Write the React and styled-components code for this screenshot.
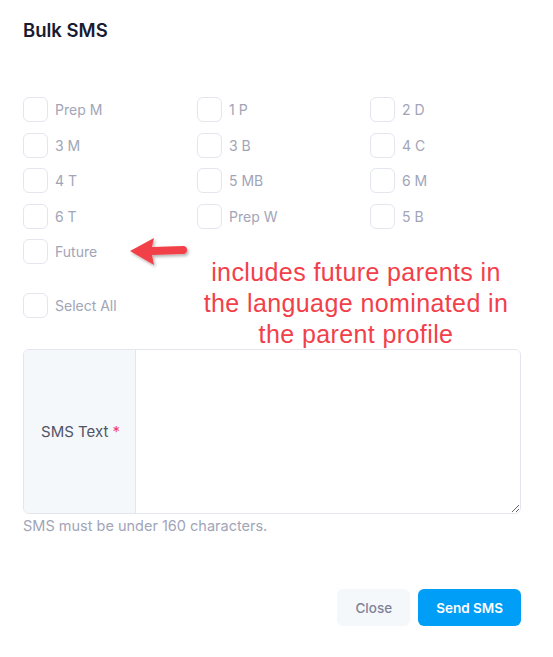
import styled, { createGlobalStyle } from "styled-components";

const GlobalStyle = createGlobalStyle`
	html, body {
		margin : 0;
		padding : 0;
		background : #ffffff;
		font-family : Inter, "Liberation Sans", Arial, sans-serif;
	}
	* { box-sizing : border-box; }
`

// 전체 모달 레이아웃
const Modal = styled.div`
	position : relative;
	width : 553px;
	height : 657px;
	padding : 19px 32px 0 23px;
	background : #ffffff;
`
const Title = styled.h3`
	margin : 0;
	font-size : 18.5px;
	font-weight : 600;
	line-height : 22px;
	color : #181c32;
`

// 반 선택 체크박스
const ClassGrid = styled.div`
	display : grid;
	grid-template-columns : 174px 173px 1fr;
	row-gap : 10.5px;
	margin-top : 56px;
`
const CheckRow = styled.label`
	display : flex;
	align-items : center;
	gap : 7px;
	height : 25px;
	font-size : 14px;
	color : #a1a5b7;
`
const Box = styled.span`
	flex : 0 0 25px;
	width : 25px;
	height : 25px;
	border : 1px solid #e4e6ef;
	border-radius : 6px;
	background : #ffffff;
`
const SelectAllWrap = styled.div`
	margin-top : 29px;
`

// 안내 주석 (스크린샷 위 덧붙임)
const Note = styled.p`
	position : absolute;
	top : 257px;
	left : 186px;
	width : 340px;
	margin : 0;
	text-align : center;
	font-family : "Liberation Sans", Arial, sans-serif;
	font-size : 25px;
	letter-spacing : 0.4px;
	line-height : 31px;
	color : #f2404a;
`
const Arrow = styled.svg`
	position : absolute;
	top : 236px;
	left : 128px;
	overflow : visible;
`

// SMS 입력
const FieldGroup = styled.div`
	display : flex;
	height : 165px;
	margin-top : 31px;
	border : 1px solid #e4e6ef;
	border-radius : 6px;
	overflow : hidden;
`
const FieldLabel = styled.div`
	display : flex;
	align-items : center;
	justify-content : center;
	flex : 0 0 112px;
	padding-left : 2px;
	background : #f5f8fa;
	border-right : 1px solid #e4e6ef;
	font-size : 15px;
	color : #4f5468;
	span { color : #f1416c; margin-left : 4px; }
`
const FieldInput = styled.textarea`
	flex : 1;
	border : 0;
	outline : none;
	padding : 10px;
	resize : vertical;
	font-family : inherit;
	font-size : 14px;
`
const Help = styled.div`
	margin-top : 3px;
	font-size : 14.5px;
	color : #a1a5b7;
`

// 버튼
const Footer = styled.div`
	display : flex;
	justify-content : flex-end;
	gap : 8px;
	margin-top : 55px;
`
const Button = styled.button`
	height : 37px;
	padding : 0 18px;
	border : 0;
	border-radius : 6px;
	font-family : inherit;
	font-size : 13.5px;
	font-weight : ${({ $primary }) => $primary ? 600 : 500};
	color : ${({ $primary }) => $primary ? '#ffffff' : '#7e8299'};
	background : ${({ $primary }) => $primary ? '#009ef7' : '#f5f8fa'};
`

const classes = [
	'Prep M', '1 P', '2 D',
	'3 M', '3 B', '4 C',
	'4 T', '5 MB', '6 M',
	'6 T', 'Prep W', '5 B',
	'Future'
]

function CheckItem({ label }) {
	return (
		<CheckRow>
			<Box />
			{label}
		</CheckRow>
	)
}

export default function App() {
	return (
		<>
			<GlobalStyle />
			<Modal>
				<Title>Bulk SMS</Title>
				<ClassGrid>
					{classes.map((c) => <CheckItem key={c} label={c} />)}
				</ClassGrid>
				<SelectAllWrap>
					<CheckItem label="Select All" />
				</SelectAllWrap>
				<FieldGroup>
					<FieldLabel>SMS Text<span>*</span></FieldLabel>
					<FieldInput />
				</FieldGroup>
				<Help>SMS must be under 160 characters.</Help>
				<Footer>
					<Button type="button">Close</Button>
					<Button type="button" $primary>Send SMS</Button>
				</Footer>

				<Arrow width="62" height="32" viewBox="0 0 62 32">
					<defs>
						<filter id="sh" x="-20%" y="-30%" width="150%" height="180%">
							<feDropShadow dx="1.5" dy="2" stdDeviation="1.5" floodColor="#000" floodOpacity="0.3" />
						</filter>
					</defs>
					<path d="M2 15 L26 2 L24 11 L55 10 Q59 10 59 14 Q59 18 55 18 L24 19 L26 29 Z" fill="#f2404a" filter="url(#sh)" />
				</Arrow>
				<Note>
					includes future parents in<br />
					the language nominated in<br />
					the parent profile
				</Note>
			</Modal>
		</>
	)
}
